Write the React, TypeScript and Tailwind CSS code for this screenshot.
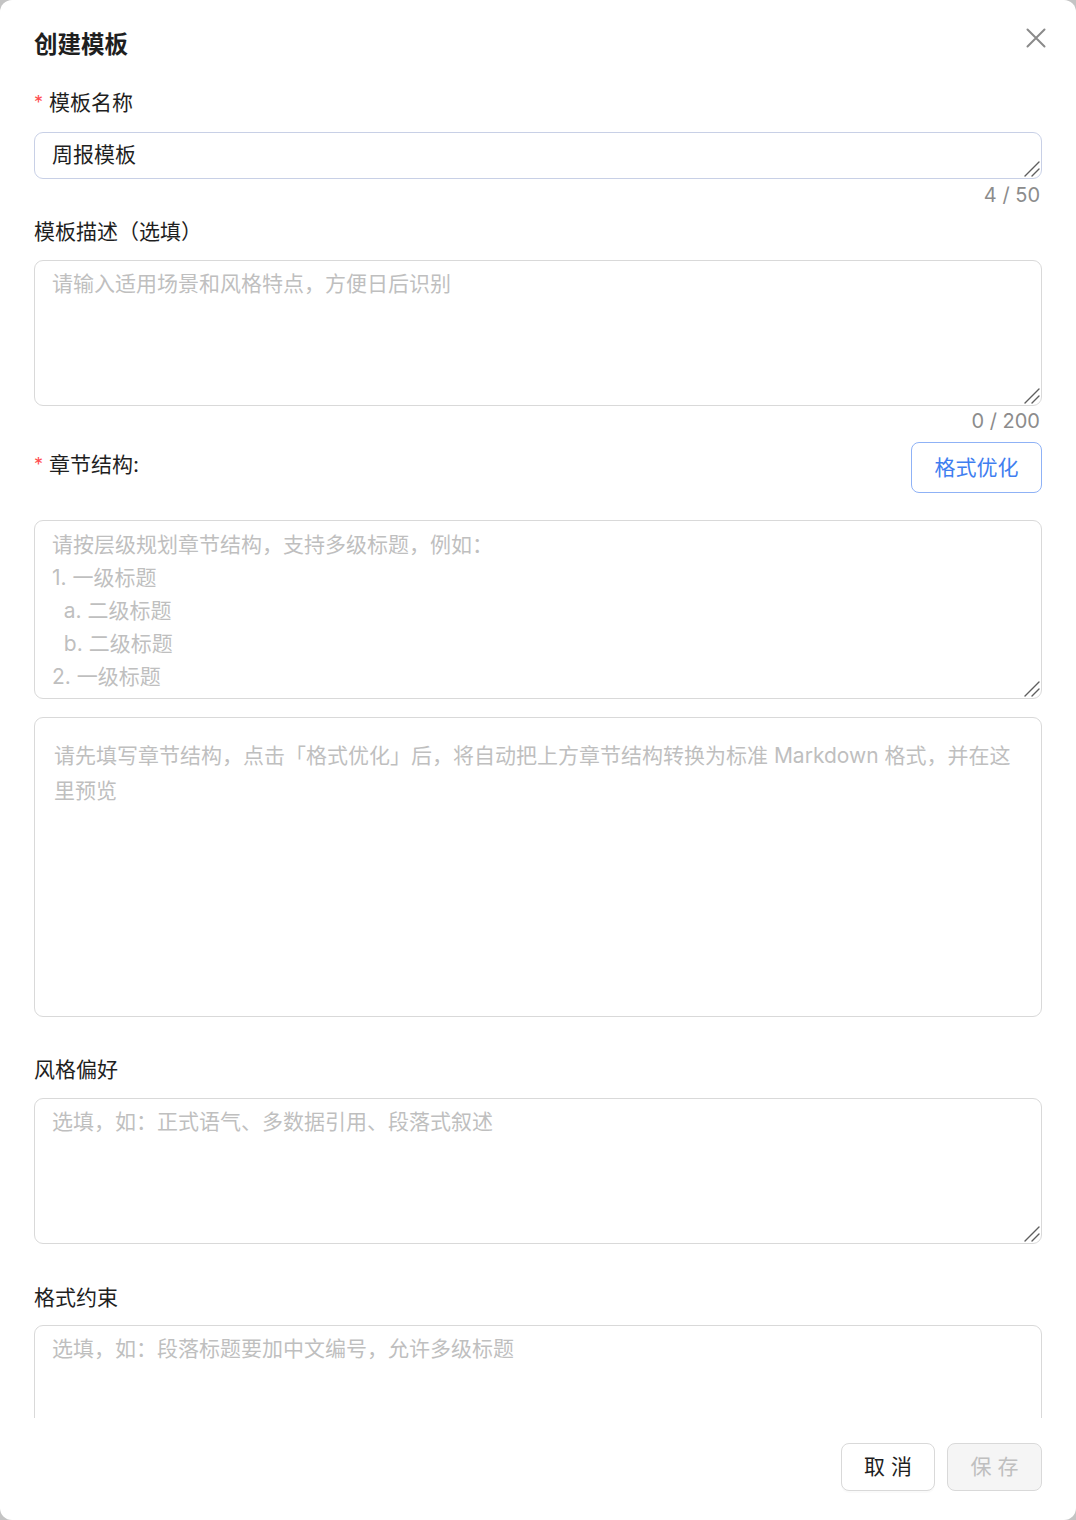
import React from "react";

const fieldBase =
  "block w-full resize-none rounded-[9px] border bg-white px-[17px] text-[21px] leading-[33px] text-[#1f1f1f] placeholder:text-[#bfbfbf] outline-none font-['Inter','Noto_Sans_CJK_SC',sans-serif]";

function Label({ required, children }: { required?: boolean; children: React.ReactNode }) {
  return (
    <div className="flex h-[28px] items-center pt-[2px] text-[21px] leading-[26px] text-[#1f1f1f]">
      {required && <span className="mr-[6px] text-[18px] leading-[26px] text-[#ff4d4f]">*</span>}
      <span>{children}</span>
    </div>
  );
}

function Counter({ text, className = "" }: { text: string; className?: string }) {
  return (
    <div className={`pr-[2px] text-right text-[20px] leading-[28px] text-[#8c8c8c] ${className}`}>{text}</div>
  );
}

function Grip() {
  return (
    <svg
      className="pointer-events-none absolute bottom-[2px] right-[2px]"
      width="16"
      height="16"
      viewBox="0 0 16 16"
      fill="none"
    >
      <path d="M1 15L15 1M8 15L15 8" stroke="#5f5f5f" strokeWidth="1.4" strokeLinecap="round" />
    </svg>
  );
}

function Field({
  className,
  placeholder,
  defaultValue,
}: {
  className: string;
  placeholder?: string;
  defaultValue?: string;
}) {
  return (
    <div className="relative">
      <textarea className={`${fieldBase} ${className}`} placeholder={placeholder} defaultValue={defaultValue} />
      <Grip />
    </div>
  );
}

export default function App() {
  const chapterHint =
    "请按层级规划章节结构，支持多级标题，例如：\n1. 一级标题\n  a. 二级标题\n  b. 二级标题\n2. 一级标题";

  return (
    <div className="min-h-screen w-full bg-[#c4c4c4] font-['Inter','Noto_Sans_CJK_SC',sans-serif]">
      <div className="flex h-[1520px] w-[1076px] flex-col overflow-hidden rounded-[12px] bg-white">
        {/* header */}
        <div className="flex h-[60px] items-start justify-between pl-[34px] pr-[28px] pt-[26px]">
          <h2 className="mt-[3px] text-[23.5px] font-semibold leading-[32px] text-[#1f1f1f]">创建模板</h2>
          <button className="flex h-[24px] w-[24px] items-center justify-center text-[#8a8a8a]" aria-label="关闭">
            <svg width="20" height="20" viewBox="0 0 20 20" fill="none">
              <path d="M1.5 1.5L18.5 18.5M18.5 1.5L1.5 18.5" stroke="currentColor" strokeWidth="2" strokeLinecap="round" />
            </svg>
          </button>
        </div>

        <div className="h-[1358px] overflow-hidden px-[34px] pt-[28px]">
          <Label required>模板名称</Label>
          <div className="mt-[16px]">
            <Field className="h-[47px] border-[#c8d0e6] pt-[5px]" defaultValue="周报模板" />
          </div>
          <Counter text="4 / 50" className="mt-[2px]" />

          <div className="mt-[8px]">
            <Label>模板描述（选填）</Label>
          </div>
          <div className="mt-[15px]">
            <Field
              className="h-[146px] border-[#d9d9d9] pt-[6px]"
              placeholder="请输入适用场景和风格特点，方便日后识别"
            />
          </div>
          <Counter text="0 / 200" className="mt-[1px]" />

          <div className="mt-[7px] flex items-start justify-between">
            <div className="pt-[8px]">
              <Label required>章节结构:</Label>
            </div>
            <button className="h-[51px] w-[131px] rounded-[8px] border border-[#8fb2f6] bg-white text-[21px] text-[#3f7ef0]">
              格式优化
            </button>
          </div>

          <div className="mt-[27px]">
            <Field className="h-[179px] border-[#d9d9d9] pt-[7px] whitespace-pre-wrap" placeholder={chapterHint} />
          </div>

          <div className="mt-[18px] h-[300px] rounded-[9px] border border-[#d9d9d9] px-[19px] pt-[20px] text-[21px] leading-[35px] text-[#bfbfbf]">
            请先填写章节结构，点击「格式优化」后，将自动把上方章节结构转换为标准 Markdown 格式，并在这里预览
          </div>

          <div className="mt-[38px]">
            <Label>风格偏好</Label>
          </div>
          <div className="mt-[15px]">
            <Field
              className="h-[146px] border-[#d9d9d9] pt-[6px]"
              placeholder="选填，如：正式语气、多数据引用、段落式叙述"
            />
          </div>

          <div className="mt-[39px]">
            <Label>格式约束</Label>
          </div>
          <div className="mt-[14px]">
            <Field
              className="h-[146px] border-[#d9d9d9] pt-[6px]"
              placeholder="选填，如：段落标题要加中文编号，允许多级标题"
            />
          </div>
        </div>

        {/* footer */}
        <div className="flex justify-end gap-[12px] px-[34px] pt-[25px]">
          <button className="h-[48px] w-[94px] rounded-[8px] border border-[#d9d9d9] bg-white text-[21px] text-[#1f1f1f] shadow-[0_2px_0_rgba(0,0,0,0.02)]">
            取 消
          </button>
          <button
            disabled
            className="h-[48px] w-[95px] rounded-[8px] border border-[#d9d9d9] bg-[#f5f5f5] text-[21px] text-[#bfbfbf]"
          >
            保 存
          </button>
        </div>
      </div>
    </div>
  );
}
